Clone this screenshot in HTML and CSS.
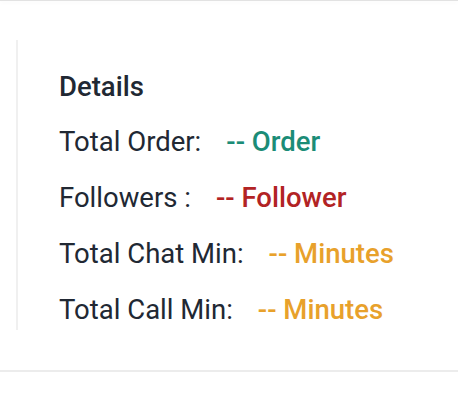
FILE: index.html
```html
<!DOCTYPE html>
<html>
<head>
<meta charset="utf-8">
<link rel="stylesheet" href="styles.css">
</head>
<body>
<div class="topbar"></div>
<section class="card">
  <h3 class="title">Details</h3>
  <div class="row"><span class="label">Total Order:</span><span class="value teal">-- Order</span></div>
  <div class="row"><span class="label">Followers :</span><span class="value red">-- Follower</span></div>
  <div class="row"><span class="label">Total Chat Min:</span><span class="value orange">-- Minutes</span></div>
  <div class="row"><span class="label">Total Call Min:</span><span class="value orange">-- Minutes</span></div>
</section>
<div class="divider"></div>
</body>
</html>
```
FILE: styles.css
```css
html, body {
  margin: 0;
  padding: 0;
  background: #ffffff;
}
body {
  font-family: Roboto, "Noto Sans", sans-serif;
  color: #212833;
  width: 458px;
  height: 402px;
  overflow: hidden;
}
.topbar {
  height: 1px;
  background: #e2e2e2;
  box-shadow: 0 1px 5px rgba(0,0,0,0.07);
}
.card {
  margin: 39px 0 0 16px;
  border-left: 2px solid #f0f0f0;
  padding: 31px 0 4px 41px;
  display: flex;
  flex-direction: column;
  gap: 24px;
}
.title {
  margin: 0 0 -1px;
  font-size: 27.5px;
  line-height: 32px;
  font-weight: 500;
}
.row {
  font-size: 27.5px;
  line-height: 32px;
  display: flex;
}
.value {
  margin-left: 25px;
  font-weight: 500;
}
.teal { color: #1b8c77; }
.red { color: #b22324; }
.orange { color: #e8a12b; }
.divider {
  margin-top: 40px;
  height: 2px;
  background: #ececec;
}
```
